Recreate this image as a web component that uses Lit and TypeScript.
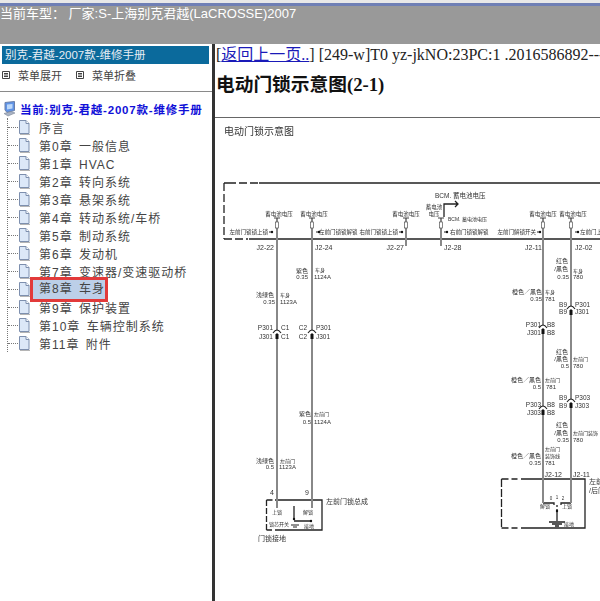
import { LitElement, html, css, svg } from "lit";
import { customElement } from "lit/decorators.js";

const CHAPTERS = [
  "序言",
  "第0章 一般信息",
  "第1章 HVAC",
  "第2章 转向系统",
  "第3章 悬架系统",
  "第4章 转动系统/车桥",
  "第5章 制动系统",
  "第6章 发动机",
  "第7章 变速器/变速驱动桥",
  "第8章 车身",
  "第9章 保护装置",
  "第10章 车辆控制系统",
  "第11章 附件",
];
const SELECTED = 9;

// [x, y, text, anchor, size] in the coordinates of the drawing
type Label = [number, number, string, string?, number?];

const LABELS: Label[] = [
  [224, 133.5, "电动门锁示意图", "start", 10],
  [279, 215, "蓄电池电压", "middle", 5.5],
  [314, 215, "蓄电池电压", "middle", 5.5],
  [406, 215, "蓄电池电压", "middle", 5.5],
  [543, 215, "蓄电池电压", "middle", 5.5],
  [573, 215, "蓄电池电压", "middle", 5.5],
  [268, 233, "左前门锁锁上锁", "end", 5.5],
  [319, 233, "左前门锁锁解锁", "start", 5.5],
  [398, 233, "右前门锁锁上锁", "end", 5.5],
  [450, 233, "右前门锁锁解锁", "start", 5.5],
  [536, 233, "左前门解锁开关", "end", 5.5],
  [580, 233, "左前门上锁", "start", 5.5],
  [435, 197, "BCM. 蓄电池电压", "start", 6.5],
  [434, 208, "蓄电池", "middle", 5.5],
  [434, 215, "电压", "middle", 5.5],
  [448, 220, "BCM. 蓄电池电压", "start", 5],
  [274, 249, "J2-22", "end", 7],
  [315, 249, "J2-24", "start", 7],
  [404, 249, "J2-27", "end", 7],
  [444, 249, "J2-28", "start", 7],
  [542, 249, "J2-11", "end", 7],
  [575, 249, "J2-02", "start", 7],
  [308, 272, "紫色", "end", 6],
  [315, 271, "车身", "start", 5],
  [308, 278, "0.35", "end", 6],
  [314, 278, "1124A", "start", 6],
  [274, 296, "浅绿色", "end", 6],
  [280, 296, "车身", "start", 5],
  [275, 303, "0.35", "end", 6],
  [280, 303, "1123A", "start", 6],
  [568, 262, "红色", "end", 6],
  [568, 270, "/黑色", "end", 6],
  [573, 272, "车身", "start", 5],
  [569, 278, "0.35", "end", 6],
  [573, 278, "780", "start", 6],
  [542, 293, "橙色／黑色", "end", 6],
  [545, 293, "车身", "start", 5],
  [542, 300, "0.35", "end", 6],
  [545, 300, "781", "start", 6],
  [567, 306, "B9", "end", 6.5],
  [575, 306, "P301", "start", 6.5],
  [567, 313, "B9", "end", 6.5],
  [575, 313, "J301", "start", 6.5],
  [541, 326, "P301", "end", 6.5],
  [547, 326, "B8", "start", 6.5],
  [541, 334, "J301", "end", 6.5],
  [547, 334, "B8", "start", 6.5],
  [273, 329, "P301", "end", 6.5],
  [281, 329, "C1", "start", 6.5],
  [273, 338, "J301", "end", 6.5],
  [281, 338, "C1", "start", 6.5],
  [307, 329, "C2", "end", 6.5],
  [316, 329, "P301", "start", 6.5],
  [307, 338, "C2", "end", 6.5],
  [316, 338, "J301", "start", 6.5],
  [568, 353, "红色", "end", 6],
  [568, 360, "/黑色", "end", 6],
  [573, 360, "左前门", "start", 5],
  [569, 367, "0.5", "end", 6],
  [573, 367, "780", "start", 6],
  [541, 381, "橙色／黑色", "end", 6],
  [545, 381, "左前门", "start", 5],
  [541, 388, "0.5", "end", 6],
  [546, 388, "781", "start", 6],
  [567, 399, "B9", "end", 6.5],
  [575, 399, "P303", "start", 6.5],
  [567, 407, "B9", "end", 6.5],
  [575, 407, "J303", "start", 6.5],
  [541, 406, "P303", "end", 6.5],
  [547, 406, "B8", "start", 6.5],
  [541, 414, "J303", "end", 6.5],
  [547, 414, "B8", "start", 6.5],
  [568, 426, "红色", "end", 6],
  [568, 434, "/黑色", "end", 6],
  [573, 434, "左前门装饰", "start", 5],
  [569, 441, "0.35", "end", 6],
  [573, 441, "780", "start", 6],
  [545, 450, "左前门", "start", 5],
  [541, 457, "橙色／黑色", "end", 6],
  [545, 457, "装饰线", "start", 5],
  [541, 464, "0.35", "end", 6],
  [545, 464, "781", "start", 6],
  [311, 415, "紫色", "end", 6],
  [314, 415, "左前门", "start", 5],
  [311, 423, "0.5", "end", 6],
  [314, 423, "1124A", "start", 6],
  [274, 462, "浅绿色", "end", 6],
  [280, 462, "左前门", "start", 5],
  [274, 468, "0.5", "end", 6],
  [279, 468, "1123A", "start", 6],
  [272, 494, "4", "middle", 7],
  [307, 494, "9", "middle", 7],
  [326, 503, "左前门锁总成", "start", 7],
  [272, 513, "上锁", "start", 5],
  [303, 513, "解锁", "start", 5],
  [269, 525, "锁芯开关", "start", 5],
  [304, 527, "接地", "start", 5],
  [258, 540, "门锁接地", "start", 7],
  [562, 476, "J2-12", "end", 7],
  [590, 476, "J2-11", "end", 7],
  [589, 483, "左前门", "start", 7],
  [589, 492, "/后门", "start", 7],
  [551, 499, "0", "middle", 4.5],
  [557, 498, "1", "middle", 4.5],
  [563, 499, "2", "middle", 4.5],
  [540, 507, "解锁", "start", 5],
  [562, 507, "上锁", "start", 5],
  [564, 525, "接地", "start", 5],
];

const WIRES = [
  [277, 217, 507],
  [312, 217, 507],
  [406, 217, 245],
  [441, 217, 245],
  [543, 217, 502],
  [571, 217, 502],
];

// x and y of each connector pair on a wire
const CONNECTORS = [
  [277, 330],
  [312, 330],
  [543, 325],
  [571, 306],
  [543, 406],
  [571, 399],
];

// x, direction of the small arrows next to the bus
const ARROWS = [
  [272, -1],
  [316, 1],
  [402, -1],
  [444, 1],
  [540, -1],
  [575, 1],
];

@customElement("app-root")
export class AppRoot extends LitElement {
  static styles = css`
    :host {
      display: block;
      width: 600px;
      height: 601px;
      overflow: hidden;
      background: #fff;
      font-family: "Liberation Sans", "Noto Sans CJK SC", sans-serif;
    }

    .top {
      height: 44px;
      box-sizing: border-box;
      background: #999;
      border-top: 3px solid #e8e8e8;
      color: #fff;
      font-size: 13px;
      line-height: 16px;
      white-space: nowrap;
    }
    .top::before {
      content: "";
      display: block;
      height: 3px;
      background: #6f7fb5;
    }

    .main {
      display: flex;
      height: 557px;
    }

    .side {
      width: 212px;
      flex: none;
      box-sizing: border-box;
      padding-top: 2px;
      color: #444;
      font-size: 12px;
      letter-spacing: 1px;
      white-space: nowrap;
    }
    .side-title {
      height: 18px;
      margin: 0 3px 0 2px;
      padding-left: 3px;
      background: #0b6a9c;
      color: #e8eef4;
      font-size: 11.5px;
      letter-spacing: 0;
      line-height: 18px;
    }
    .menu {
      display: flex;
      align-items: center;
      height: 28px;
      box-sizing: border-box;
      padding: 0 0 6px 2px;
      border-bottom: 1px solid #8a8a8a;
      font-size: 11px;
      letter-spacing: 0;
    }
    .menu svg {
      margin-right: 8px;
    }
    .menu span {
      margin-right: 14px;
    }

    .root {
      display: flex;
      align-items: center;
      height: 18px;
      margin-top: 8px;
      padding-left: 3px;
      color: #1010d8;
      font-weight: 700;
      font-size: 11.5px;
      letter-spacing: 0.8px;
    }
    .root svg {
      margin-right: 4px;
    }

    ul {
      list-style: none;
      margin: 0 0 0 7px;
      padding: 0;
      border-left: 1px dotted #777;
    }
    li {
      display: flex;
      align-items: center;
      height: 18px;
    }
    li:last-child {
      margin-bottom: -9px;
    }
    .stub {
      width: 10px;
      border-top: 1px dotted #777;
    }
    li svg {
      flex: none;
    }
    .name {
      margin-left: 9px;
      word-spacing: 2px;
    }
    .selected {
      margin-left: 3px;
      padding: 2px 0 2px 6px;
      background: #bccfe8;
      outline: 3px solid #e23a3a;
      line-height: 15px;
    }

    .content {
      flex: 1;
      min-width: 0;
      border-left: 3px solid #333;
      overflow: hidden;
    }
    .back {
      height: 21px;
      padding: 1px 0 0 1px;
      box-sizing: border-box;
      font: 16px/20px "Liberation Serif", "Noto Sans CJK SC", serif;
      color: #222;
      white-space: nowrap;
    }
    .back a {
      color: #1a1ab8;
      text-decoration: underline;
    }
    h3 {
      margin: 9px 0 0 1px;
      height: 43px;
      font: 700 18.72px/22px "Liberation Serif", "Noto Sans CJK SC", serif;
      color: #111;
    }
    .drawing {
      display: block;
      width: 385px;
      height: 484px;
      border-top: 1px solid #666;
      filter: blur(0.3px);
    }
    .drawing text {
      fill: #333;
    }
  `;

  renderPage() {
    return html`<svg width="12" height="16" viewBox="0 0 12 16">
      <path d="M1.5 1.5H8L11 4.5V14.5H1.5Z" fill="#dce8f8" stroke="#7d8fae" />
      <path d="M8 1.5V4.5H11" fill="#fff" stroke="#7d8fae" />
      <path d="M2 15.5H12" stroke="#b5b5b5" />
    </svg>`;
  }

  renderMenuIcon() {
    return html`<svg width="8" height="8" viewBox="0 0 8 8">
      <path d="M.5.5H7.500V7.500H.5Z" fill="#fff" stroke="#444" />
      <path d="M2 2.500H6M2 4H6M2 5.500H6" stroke="#444" />
    </svg>`;
  }

  renderDrawing() {
    const frame = "#222";
    return html`<svg class="drawing" viewBox="215 117 385 484" font-family='"Liberation Sans","Noto Sans CJK SC",sans-serif'>
      <g fill="none" stroke=${frame} stroke-width="1.300">
        <path d="M224 182H258" stroke-dasharray="12 3 8 3" />
        <path d="M259 182H600M249 238H600" />
        <path d="M224 238H248" stroke-dasharray="8 3" />
        <path d="M224 182V238" stroke-dasharray="8 3" />

        <path d="M275 499H322V529H275" />
        <path d="M266.500 499H273M266.500 529H272M266.500 499V529" stroke-dasharray="6 2" />
        <path d="M294 505V517M294 520H311" />

        <path d="M521 478H585V527H521" />
        <path d="M501.500 478H520M501.500 527H520" stroke-dasharray="7 3 6 3" />
        <path d="M501.500 478V527" stroke-dasharray="8 2" />
        <path d="M543 502H554V504M561 504V502H571" />
        <path d="M557 504V510" stroke-dasharray="2 2" />
        <path d="M557 510V520M549 521H565M552 523H562M555 525H559" />
        <path d="M444 216V203H458M455 200L458 203L455 206" />
      </g>

      ${WIRES.map(
        ([x, y1, y2]) => svg`
          <path d="M${x} ${y1}V${y2}" stroke="#888" stroke-width="2" fill="none" />
          <path d="M${x - 3} ${y1}H${x + 3}" stroke="#444" fill="none" />
          <rect x=${x - 1.5} y=${y1 + 4} width="3" height="6" fill="#fff" stroke="#555" stroke-width=".7" />
        `
      )}
      ${CONNECTORS.map(
        ([x, y]) => svg`
          <path d="M${x - 4} ${y + 2}Q${x} ${y - 4} ${x + 4} ${y + 2}" fill="#fff" stroke="#222" stroke-width="1.100" />
          <rect x=${x - 1.5} y=${y + 3} width="3" height="5" fill="#111" />
        `
      )}
      ${ARROWS.map(
        ([x, dir]) => svg`
          <path d="M${x} 231h${dir * 3}" stroke="#222" />
          <circle cx=${x + (dir < 0 ? 0 : 3)} cy="231" r="1.200" fill="#111" />
        `
      )}
      <circle cx="294" cy="518" r="1.200" fill="#111" />
      <circle cx="311" cy="520" r="1.200" fill="#111" />
      <circle cx="557" cy="510" r="1.200" fill="#111" />
      <path d="M291 524H299M293 526H297" stroke="#222" />

      ${LABELS.map(
        ([x, y, label, anchor, size]) => svg`
          <text x=${x} y=${y} text-anchor=${anchor ?? "start"} font-size=${size ?? 6}>${label}</text>
        `
      )}
    </svg>`;
  }

  render() {
    return html`
      <div class="top">当前车型： 厂家:S-上海别克君越(LaCROSSE)2007</div>
      <div class="main">
        <nav class="side">
          <div class="side-title">别克-君越-2007款-维修手册</div>
          <div class="menu">
            ${this.renderMenuIcon()}<span>菜单展开</span>
            ${this.renderMenuIcon()}<span>菜单折叠</span>
          </div>
          <div class="root">
            <svg width="13" height="16" viewBox="0 0 13 16">
              <path d="M2 1.500L11.500.5V9.500L4 11.500L2 9Z" fill="#5f93e6" stroke="#6a7fa8" />
              <path d="M4 3.500L9.500 3V7.500L4 8.500Z" fill="#bcd8fa" />
              <path d="M1 12.500L8 10.500L12 12L5 15Z" fill="#a9b3c4" stroke="#7d8797" stroke-width=".6" />
            </svg>
            当前:别克-君越-2007款-维修手册
          </div>
          <ul>
            ${CHAPTERS.map(
              (name, i) => html`
                <li>
                  <span class="stub"></span>
                  ${this.renderPage()}
                  <span class=${i === SELECTED ? "name selected" : "name"}>${name}</span>
                </li>
              `
            )}
          </ul>
        </nav>
        <section class="content">
          <div class="back">[<a href="#">返回上一页..</a>] [249-w]T0 yz-jkNO:23PC:1 .2016586892---</div>
          <h3>电动门锁示意图(2-1)</h3>
          ${this.renderDrawing()}
        </section>
      </div>
    `;
  }
}
